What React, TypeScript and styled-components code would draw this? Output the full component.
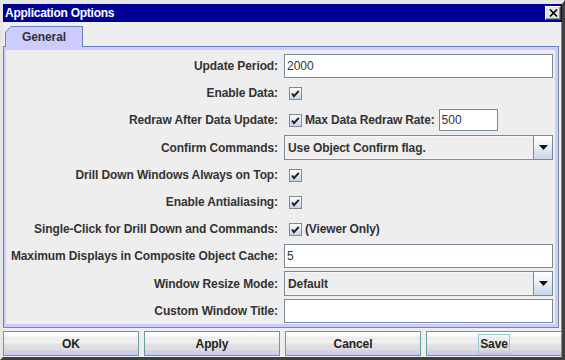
import styled, { createGlobalStyle } from "styled-components";

const GlobalStyle = createGlobalStyle`
  html, body {
    margin: 0;
    padding: 0;
    background: #eeeeee;
  }
  body {
    font-family: "Liberation Sans", Arial, sans-serif;
  }
`;

const Window = styled.div`
  width: 565px;
  height: 360px;
  box-sizing: border-box;
  display: flex;
  flex-direction: column;
  overflow: hidden;
  background: #eeeeee;
  border-style: solid;
  border-width: 4px 3px 3px 3px;
  border-color: #e6e6e6 #404040 #404040 #e6e6e6;
  box-shadow: inset -1px 0 0 #8a8a8a;
`;

const TitleBar = styled.div`
  height: 18px;
  flex: none;
  display: flex;
  align-items: center;
  justify-content: space-between;
  padding: 0 1px 0 2px;
  background: #000099;
`;

const TitleText = styled.span`
  color: #ffffff;
  font-size: 12px;
  font-weight: bold;
  letter-spacing: -0.25px;
`;

const CloseButton = styled.div`
  width: 16px;
  height: 14px;
  box-sizing: border-box;
  display: flex;
  align-items: center;
  justify-content: center;
  background: #e4e4e4;
  border-style: solid;
  border-width: 1px;
  border-color: #ffffff #404040 #404040 #ffffff;
  box-shadow: inset -1px -1px 0 #909090;
`;

const Body = styled.div`
  flex: 1;
  display: flex;
  flex-direction: column;
  padding-top: 4px;
`;

const Tab = styled.div`
  position: relative;
  z-index: 1;
  width: 78px;
  height: 21px;
  margin: 0 0 -1px 2px;
  background: #6382bf;
  clip-path: polygon(6px 0, 100% 0, 100% 100%, 0 100%, 0 6px);
`;

const TabFace = styled.div`
  position: absolute;
  inset: 1px 1px 0 1px;
  display: flex;
  align-items: center;
  justify-content: center;
  background: #ccccff;
  clip-path: polygon(5px 0, 100% 0, 100% 100%, 0 100%, 0 5px);
  color: #333333;
  font-size: 12px;
  font-weight: bold;
  letter-spacing: -0.1px;
`;

const Panel = styled.div`
  margin-right: 3px;
  border-style: solid;
  border-width: 1px;
  border-color: #6382bf #7a8a99 #7a8a99 #6382bf;
  padding: 3px 3px 3px 2px;
  background: #ccccff;
`;

const Form = styled.div`
  display: grid;
  grid-template-columns: 272px 269px;
  column-gap: 6px;
  row-gap: 3px;
  align-items: center;
  padding: 4px 2px 1px 0;
  background: #eeeeee;
`;

const Label = styled.label`
  text-align: right;
  white-space: nowrap;
  color: #333333;
  font-size: 12px;
  font-weight: bold;
  letter-spacing: -0.1px;
`;

const TextField = styled.input<{ $width?: number }>`
  box-sizing: border-box;
  width: ${(p) => (p.$width ? `${p.$width}px` : "100%")};
  height: ${(p) => (p.$width ? "22px" : "24px")};
  margin: 0;
  padding: 0 2px;
  border: 1px solid #7a8a99;
  background: #ffffff;
  color: #333333;
  font-family: "Liberation Sans", Arial, sans-serif;
  font-size: 12px;
  outline: none;
`;

const CheckCell = styled.div`
  height: 24px;
  display: flex;
  align-items: center;
  padding-left: 5px;
  gap: 3px;
`;

const InlineLabel = styled.span`
  white-space: nowrap;
  color: #333333;
  font-size: 12px;
  font-weight: bold;
  letter-spacing: -0.15px;
  margin-right: 1px;
`;

const Combo = styled.div`
  box-sizing: border-box;
  height: 25px;
  display: flex;
  border: 1px solid #7a8a99;
  background: #eeeeee;
`;

const ComboValue = styled.div`
  flex: 1;
  display: flex;
  align-items: center;
  padding-left: 2px;
  border: 1px solid #f8f8f8;
  border-right: none;
  color: #333333;
  font-size: 12px;
  font-weight: bold;
  letter-spacing: -0.1px;
`;

const ComboArrow = styled.div`
  width: 18px;
  display: flex;
  align-items: center;
  justify-content: center;
  border-left: 1px solid #7a8a99;
  background: linear-gradient(to bottom, #ffffff 0%, #eef3f8 35%, #c8d7e6 100%);
`;

const ButtonBar = styled.div`
  display: grid;
  grid-template-columns: repeat(4, 1fr);
  column-gap: 5px;
  margin-top: 3px;
`;

const Button = styled.div`
  box-sizing: border-box;
  height: 25px;
  display: flex;
  align-items: center;
  justify-content: center;
  border: 1px solid #6a9c9c;
  background: linear-gradient(
    to bottom,
    #ffffff 0px,
    #fafafa 4px,
    #eeeeee 5px,
    #eeeeee 9px,
    #f6f6f6 10px,
    #e3e3e3 12px,
    #dcdcdc 18px,
    #d0d0f2 19px,
    #c8c8f4 100%
  );
  color: #222222;
  font-size: 12px;
  font-weight: bold;
  letter-spacing: -0.1px;
`;

const FocusRing = styled.span`
  padding: 2px 1px;
  border: 1px solid #99cccc;
`;

const CheckBox = () => (
  <svg width="13" height="13" viewBox="0 0 13 13">
    <defs>
      <linearGradient id="cbg" x1="0" y1="0" x2="0" y2="1">
        <stop offset="0" stopColor="#ffffff" />
        <stop offset="0.4" stopColor="#e8eff6" />
        <stop offset="1" stopColor="#c2d3e4" />
      </linearGradient>
    </defs>
    <rect x="0.5" y="0.5" width="12" height="12" fill="url(#cbg)" stroke="#7a8a99" />
    <polyline points="3,6.5 5,9.2 9.8,3.8" fill="none" stroke="#222222" strokeWidth="2" />
  </svg>
);

const Arrow = () => (
  <svg width="9" height="5" viewBox="0 0 9 5">
    <polygon points="0,0 9,0 4.5,5" fill="#111111" />
  </svg>
);

export default () => {
  return (
    <>
      <GlobalStyle />
      <Window>
        <TitleBar>
          <TitleText>Application Options</TitleText>
          <CloseButton>
            <svg width="9" height="8" viewBox="0 0 9 8">
              <path d="M1 0.5 L8 7.5 M8 0.5 L1 7.5" stroke="#000000" strokeWidth="1.6" />
            </svg>
          </CloseButton>
        </TitleBar>
        <Body>
          <Tab>
            <TabFace>General</TabFace>
          </Tab>
          <Panel>
            <Form>
              <Label>Update Period:</Label>
              <TextField readOnly defaultValue="2000" />

              <Label>Enable Data:</Label>
              <CheckCell>
                <CheckBox />
              </CheckCell>

              <Label>Redraw After Data Update:</Label>
              <CheckCell>
                <CheckBox />
                <InlineLabel>Max Data Redraw Rate:</InlineLabel>
                <TextField readOnly defaultValue="500" $width={59} />
              </CheckCell>

              <Label>Confirm Commands:</Label>
              <Combo>
                <ComboValue>Use Object Confirm flag.</ComboValue>
                <ComboArrow>
                  <Arrow />
                </ComboArrow>
              </Combo>

              <Label>Drill Down Windows Always on Top:</Label>
              <CheckCell>
                <CheckBox />
              </CheckCell>

              <Label>Enable Antialiasing:</Label>
              <CheckCell>
                <CheckBox />
              </CheckCell>

              <Label>Single-Click for Drill Down and Commands:</Label>
              <CheckCell>
                <CheckBox />
                <InlineLabel>(Viewer Only)</InlineLabel>
              </CheckCell>

              <Label>Maximum Displays in Composite Object Cache:</Label>
              <TextField readOnly defaultValue="5" />

              <Label>Window Resize Mode:</Label>
              <Combo>
                <ComboValue>Default</ComboValue>
                <ComboArrow>
                  <Arrow />
                </ComboArrow>
              </Combo>

              <Label>Custom Window Title:</Label>
              <TextField readOnly defaultValue="" />
            </Form>
          </Panel>
          <ButtonBar>
            <Button>OK</Button>
            <Button>Apply</Button>
            <Button>Cancel</Button>
            <Button>
              <FocusRing>Save</FocusRing>
            </Button>
          </ButtonBar>
        </Body>
      </Window>
    </>
  );
};
